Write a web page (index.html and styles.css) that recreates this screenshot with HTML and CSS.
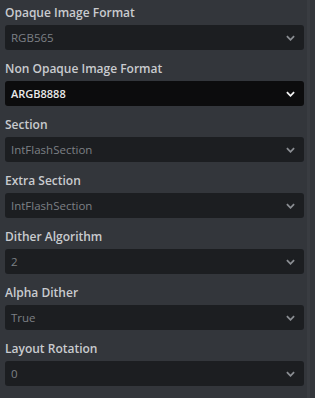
FILE: index.html
```html
<!DOCTYPE html>
<html lang="en">

<head>
    <meta charset="UTF-8">
    <meta name="viewport" content="width=device-width, initial-scale=1.0">
    <title>Properties</title>
    <link rel="stylesheet" href="styles.css">
</head>

<body>
    <div class="panel">
        <div class="props">
            <div class="field">
                <label class="label">Opaque Image Format</label>
                <div class="select">
                    <span class="value">RGB565</span>
                    <svg class="chevron" viewBox="0 0 10 6"><path d="M1 1l4 4 4-4" /></svg>
                </div>
            </div>
            <div class="field">
                <label class="label">Non Opaque Image Format</label>
                <div class="select select-active">
                    <span class="value">ARGB8888</span>
                    <svg class="chevron" viewBox="0 0 10 6"><path d="M1 1l4 4 4-4" /></svg>
                </div>
            </div>
            <div class="field">
                <label class="label">Section</label>
                <div class="select">
                    <span class="value">IntFlashSection</span>
                    <svg class="chevron" viewBox="0 0 10 6"><path d="M1 1l4 4 4-4" /></svg>
                </div>
            </div>
            <div class="field">
                <label class="label">Extra Section</label>
                <div class="select">
                    <span class="value">IntFlashSection</span>
                    <svg class="chevron" viewBox="0 0 10 6"><path d="M1 1l4 4 4-4" /></svg>
                </div>
            </div>
            <div class="field">
                <label class="label">Dither Algorithm</label>
                <div class="select">
                    <span class="value">2</span>
                    <svg class="chevron" viewBox="0 0 10 6"><path d="M1 1l4 4 4-4" /></svg>
                </div>
            </div>
            <div class="field">
                <label class="label">Alpha Dither</label>
                <div class="select">
                    <span class="value">True</span>
                    <svg class="chevron" viewBox="0 0 10 6"><path d="M1 1l4 4 4-4" /></svg>
                </div>
            </div>
            <div class="field">
                <label class="label">Layout Rotation</label>
                <div class="select">
                    <span class="value">0</span>
                    <svg class="chevron" viewBox="0 0 10 6"><path d="M1 1l4 4 4-4" /></svg>
                </div>
            </div>
        </div>
        <div class="scrollbar"></div>
    </div>
</body>

</html>
```

FILE: styles.css
```css
* {
    margin: 0;
    padding: 0;
    box-sizing: border-box;
}

body {
    background-color: #33363b;
    font-family: 'Open Sans', 'Noto Sans', sans-serif;
    width: 315px;
    height: 398px;
    overflow: hidden;
}

.panel {
    display: flex;
    height: 398px;
}

.props {
    flex: 1;
    display: flex;
    flex-direction: column;
    gap: 9px;
    padding: 3px 0 0 5px;
}

.field {
    display: flex;
    flex-direction: column;
    gap: 3px;
}

.label {
    font-size: 12px;
    font-weight: 600;
    color: #c9cbcf;
    line-height: 19px;
    height: 19px;
}

.select {
    width: 299px;
    height: 25px;
    background-color: #1c1e21;
    border-radius: 3px;
    display: flex;
    align-items: center;
    justify-content: space-between;
    padding: 0 8px 0 6px;
}

.select-active {
    background-color: #0c0c0d;
}

.value {
    font-size: 11.5px;
    color: #7d8085;
}

.select-active .value {
    color: #eaeaea;
    font-weight: 600;
    font-size: 11px;
}

.chevron {
    width: 9px;
    height: 6px;
    fill: none;
    stroke: #8a8d92;
    stroke-width: 2;
    margin-right: 1px;
}

.select-active .chevron {
    stroke: #f2f2f2;
}

.scrollbar {
    width: 3px;
    margin: 0 5px 0 2px;
    background-color: #393c41;
}
```
